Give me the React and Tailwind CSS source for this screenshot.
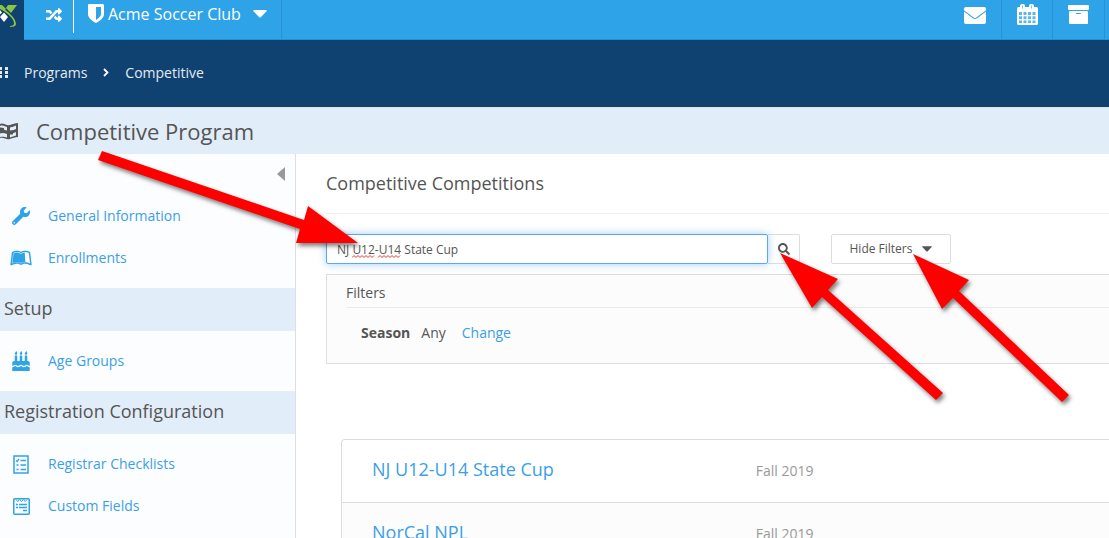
import React, { useState } from 'react';
import { FaBirthdayCake, FaLeanpub, FaRandom, FaSearch, FaWrench } from 'react-icons/fa';

const LogoMark = () => (
  <svg viewBox="0 0 24 40" className="w-6 h-10" aria-hidden="true">
    <path d="M8 5h9l-6 8-5-5z" fill="#8cc63f" />
    <path d="M0 5h2l4 4-2 2-4-3z" fill="#8cc63f" />
    <path d="M0 7c7 3 16 11 16 17 0 2-2 3-6 3v-1c3 0 4-1 4-3 0-4-7-11-14-14z" fill="#8cc63f" />
    <path d="M4 12.500l4 4.500-4 5-4-5z" fill="#fff" />
    <path d="M0 10l2 2.500-2 2z" fill="#fff" />
  </svg>
);

const ShieldIcon = () => (
  <svg viewBox="0 0 16 19" className="w-4 h-[19px]" fill="currentColor" fillRule="evenodd" aria-hidden="true">
    <path d="M0 1.200Q0 0 1.200 0h13.600Q16 0 16 1.200V10c0 4-4 7-8 9-4-2-8-5-8-9zM8 3v13c3-2 5-4 5-6V3z" />
  </svg>
);

const MailIcon = () => (
  <svg viewBox="0 0 22 17" className="w-[22px] h-[17px]" fill="currentColor" aria-hidden="true">
    <path d="M0 2q0-2 2-2h18q2 0 2 2v1.200L12.400 10.400q-1.400 1-2.800 0L0 3.200z" />
    <path d="M0 4.500l8.800 6.700q2.200 1.500 4.400 0L22 4.500V15q0 2-2 2H2q-2 0-2-2z" />
  </svg>
);

const CalendarIcon = () => (
  <svg viewBox="0 0 21 21" className="w-[21px] h-[21px]" aria-hidden="true">
    <rect x="0" y="3" width="21" height="18" rx="1.500" fill="#fff" />
    <rect x="3" y="0" width="5" height="6" rx="2" fill="#fff" />
    <rect x="12" y="0" width="5" height="6" rx="2" fill="#fff" />
    <path d="M5.500 1.500v3M14.500 1.500v3" stroke="#7cc4f0" />
    <path
      d="M2 8h3v3H2zM6.500 8h3v3h-3zM11 8h3v3h-3zM15.500 8h3v3h-3zM2 12.200h3v3H2zM6.500 12.200h3v3h-3zM11 12.200h3v3h-3zM15.500 12.200h3v3h-3zM2 16.400h3v2.600H2zM6.500 16.400h3v2.600h-3zM11 16.400h3v2.600h-3zM15.500 16.400h3v2.600h-3z"
      fill="#5cb6ec"
    />
  </svg>
);

const ArchiveIcon = () => (
  <svg viewBox="0 0 21 19" className="w-[21px] h-[19px]" aria-hidden="true">
    <rect x="0" y="0" width="21" height="5" rx="1" fill="#fff" />
    <rect x="1" y="6" width="19" height="13" rx="1" fill="#fff" />
    <path d="M8.500 8.500h4" stroke="#2fa3e7" strokeLinecap="round" />
  </svg>
);

const FlagIcon = () => (
  <svg viewBox="0 0 19 17" className="w-[19px] h-[17px]" aria-hidden="true">
    <path d="M0 1c3-2 6 2 10 1 3-1 5-2 8-2v14c-3 0-5 1-8 2-4 1-6-2-10-1z" fill="#555" />
    <path d="M0 3c2-1 4 0 7 1v3.500c-3-1-4-1-7 0zM10 4.500q3-.5 6-2V6q-3 1.500-6 2zM0 10.500q3-1 7 .5v3.500c-3-1-4-1-7-.5zM10 11q3-.5 6-2v3.500q-3 1-6 2z" fill="#e1edf9" />
    <path d="M0 4.500l4 .5v5H0zM10 7.500h3v4h-3z" fill="#555" />
  </svg>
);

const CaretIcon = ({ className }) => (
  <svg viewBox="0 0 14 8" className={className} fill="currentColor" aria-hidden="true">
    <path d="M1 0h12q1.500 0 .5 1.200L8 7q-1 1-2 0L.5 1.200Q-.5 0 1 0z" />
  </svg>
);

const ChecklistIcon = () => (
  <svg viewBox="0 0 16 19" className="w-4 h-[19px]" fill="none" stroke="currentColor" aria-hidden="true">
    <rect x="1" y="1" width="14" height="17" strokeWidth="1.500" />
    <path d="M3 5.500l1 1 2-2.500M7.500 5.500H13M7.500 10H13M7.500 14.500H13M3.500 10h2M3.500 14.500h2" strokeWidth="1.300" />
  </svg>
);

const FieldsIcon = () => (
  <svg viewBox="0 0 17 17" className="w-[17px] h-[17px]" fill="none" stroke="currentColor" aria-hidden="true">
    <rect x="0.750" y="0.750" width="15.500" height="15.500" rx="1" strokeWidth="1.500" />
    <path d="M3 1.500l1.800 2 1.800-2 1.900 2 1.900-2 1.800 2 1.800-2" />
    <path d="M3 6.500h2M6 6.500h8M3 9.500h2M6 9.500h8M10 12.500h4" strokeWidth="1.400" />
  </svg>
);

const navSections = [
  {
    title: null,
    items: [
      { label: 'General Information', icon: <FaWrench size={18} /> },
      { label: 'Enrollments', icon: <FaLeanpub size={22} /> },
    ],
  },
  {
    title: 'Setup',
    items: [{ label: 'Age Groups', icon: <FaBirthdayCake size={20} /> }],
  },
  {
    title: 'Registration Configuration',
    items: [
      { label: 'Registrar Checklists', icon: <ChecklistIcon /> },
      { label: 'Custom Fields', icon: <FieldsIcon /> },
    ],
  },
];

const competitions = [
  { name: 'NJ U12-U14 State Cup', season: 'Fall 2019' },
  { name: 'NorCal NPL', season: 'Fall 2019' },
];

const TopBar = () => (
  <header className="flex h-10 shrink-0 bg-[#2fa3e7] text-white">
    <a href="#home" aria-label="Home" className="bg-[#0f4271]">
      <LogoMark />
    </a>
    <div className="flex flex-1 border-b border-[#2490d2]">
      <button type="button" aria-label="Switch" className="w-[50px] h-[33px] pl-[22px] pb-1 border-r border-white">
        <FaRandom size={16} />
      </button>
      <button type="button" className="flex items-center gap-1 pl-3.5 pr-3.5 pb-3 border-r border-[#2992d6] text-base font-medium">
        <ShieldIcon />
        <span>Acme Soccer Club</span>
        <CaretIcon className="w-3.5 h-2 ml-2" />
      </button>
      <div className="flex ml-auto mr-1">
        <button type="button" aria-label="Messages" className="flex w-[53px] justify-center pt-[7px] border-r border-[#2992d6]">
          <MailIcon />
        </button>
        <button type="button" aria-label="Calendar" className="flex w-[51px] justify-center pt-1 border-r border-[#2992d6]">
          <CalendarIcon />
        </button>
        <button type="button" aria-label="Archive" className="flex w-[52px] justify-center pt-[5px] border-r border-[#2992d6]">
          <ArchiveIcon />
        </button>
      </div>
    </div>
  </header>
);

const Breadcrumb = () => (
  <nav aria-label="Breadcrumb" className="flex h-[67px] shrink-0 items-center pb-0.5 bg-[#0f4271] text-sm text-[#e3ebf3]">
    <svg viewBox="0 0 8 11" className="w-2 h-[11px]" fill="currentColor" aria-hidden="true">
      <path d="M0 0h2v3H0zM5 0h3v3H5zM0 4h2v3H0zM5 4h3v3H5zM0 8h2v3H0zM5 8h3v3H5z" />
    </svg>
    <a href="#programs" className="ml-4">Programs</a>
    <svg viewBox="0 0 6 9" className="w-1.5 h-[9px] mx-4" fill="none" stroke="#fff" strokeWidth="1.800" aria-hidden="true">
      <path d="M1 1l3.500 3.500L1 8" />
    </svg>
    <a href="#competitive">Competitive</a>
  </nav>
);

const Sidebar = () => (
  <aside className="w-[296px] shrink-0 border-r border-[#dcdfe3] bg-[#fcfdff]">
    <div className="flex h-8 justify-end pt-[13px] pr-2.5">
      <button type="button" aria-label="Collapse menu" className="w-2 h-3.5">
        <svg viewBox="0 0 8 14" className="w-2 h-3.5" fill="#999" aria-hidden="true">
          <path d="M8 0v14L0 7z" />
        </svg>
      </button>
    </div>
    {navSections.map((section) => (
      <section key={section.title || 'main'}>
        {section.title && (
          <h2 className="h-[43px] px-1 text-lg leading-[38px] text-[#555] bg-[#e1edf9] border-y border-[#e6edf3]">
            {section.title}
          </h2>
        )}
        <ul className="py-[9px]">
          {section.items.map((item) => (
            <li key={item.label}>
              <a href="#section" className="flex h-[42px] items-center text-sm text-[#3b9fe6]">
                <span className="flex w-[22px] ml-2.5 mr-4 justify-center text-[#2fa3e7]">{item.icon}</span>
                {item.label}
              </a>
            </li>
          ))}
        </ul>
      </section>
    ))}
  </aside>
);

const SearchBar = () => {
  const [query, setQuery] = useState('NJ U12-U14 State Cup');

  return (
    <div className="flex mt-5">
      <form className="flex w-[474px]" onSubmit={(e) => e.preventDefault()}>
        <div className="relative flex-1">
          <input
            type="text"
            aria-label="Search competitions"
            value={query}
            onChange={(e) => setQuery(e.target.value)}
            className="w-full h-[30px] px-2.5 text-xs text-[#555] bg-white border border-[#5aaae6] rounded-xs outline-none shadow-[0_0_8px_rgba(102,175,233,0.6)]"
          />
          {/* Spelling marks */}
          <svg className="absolute left-[26px] top-[21px] w-[49px] h-[3px] pointer-events-none" viewBox="0 0 49 3" fill="none" stroke="#f03030" aria-hidden="true">
            <path d="M0 2.500l2-2 2 2 2-2 2 2 2-2 2 2 2-2 2 2 2-2 2 2 2-2M26 2.500l2-2 2 2 2-2 2 2 2-2 2 2 2-2 2 2 2-2 2 2 2-2" />
          </svg>
        </div>
        <button type="submit" aria-label="Search" className="flex w-8 h-[30px] items-center justify-center text-[#555] border border-l-0 border-[#ddd] rounded-r-xs">
          <FaSearch size={12} />
        </button>
      </form>
      <button type="button" className="flex h-[30px] ml-[31px] w-[120px] items-center justify-center gap-2.5 text-xs text-[#555] border border-[#ddd] rounded-xs">
        Hide Filters
        <CaretIcon className="w-2.5 h-1.5" />
      </button>
    </div>
  );
};

const Filters = () => (
  <section className="mt-2.5 h-[90px] pl-[19px] bg-[#fcfcfc] border border-r-0 border-[#ddd] text-sm text-[#555]">
    <h3 className="h-[33px] pt-2 border-b border-[#eaeaea]">Filters</h3>
    <div className="flex items-center pl-[15px] pt-[15px]">
      <span className="font-bold">Season</span>
      <span className="ml-[11px]">Any</span>
      <a href="#change" className="ml-4 text-[#3b9fe6]">Change</a>
    </div>
  </section>
);

const CompetitionList = () => (
  <table className="w-full text-left border-separate border-spacing-0">
    <tbody className="text-[#999]">
      {competitions.map((item, index) => (
        <tr key={item.name} className={index % 2 ? 'bg-[#fcfcfc]' : 'bg-white'}>
          <td className={`w-[54%] h-[63px] pl-[30px] border-t border-l border-[#ddd] text-lg ${index === 0 ? 'rounded-tl' : ''}`}>
            <a href="#competition" className="block pb-1 text-[#3b9fe6]">{item.name}</a>
          </td>
          <td className="border-t border-[#ddd] text-sm">{item.season}</td>
        </tr>
      ))}
    </tbody>
  </table>
);

const arrows = [
  '102,151 304,220 308,206 358,243 296,243 300,229 98,160',
  '780,253 838,279 828,290 943,393 936,400 822,297 812,308',
  '913,254 969,280 959,291 1069,395 1062,402 953,298 942,309',
];

const Annotations = () => (
  <svg className="absolute left-0 top-0 w-[1109px] h-[538px] pointer-events-none drop-shadow-[2px_3px_2px_rgba(0,0,0,0.5)]" viewBox="0 0 1109 538" fill="#f00" aria-hidden="true">
    {arrows.map((points) => (
      <polygon key={points} points={points} />
    ))}
  </svg>
);

export default function App() {
  return (
    <div className="relative flex flex-col h-screen overflow-hidden bg-white font-['Open_Sans',sans-serif]">
      <TopBar />
      <Breadcrumb />
      <div className="flex h-[47px] shrink-0 items-center gap-[17px] bg-[#e1edf9] border-t border-[#e3e0e2]">
        <FlagIcon />
        <h1 className="text-[22px] leading-7 text-[#555]">Competitive Program</h1>
      </div>
      <div className="flex flex-1">
        <Sidebar />
        <main className="flex-1 min-w-0 pl-[30px]">
          <h2 className="h-[60px] pt-[15px] text-lg text-[#555] border-b border-[#eee]">Competitive Competitions</h2>
          <SearchBar />
          <Filters />
          <div className="pl-[15px] pt-[75px]">
            <CompetitionList />
          </div>
        </main>
      </div>
      <Annotations />
    </div>
  );
}
